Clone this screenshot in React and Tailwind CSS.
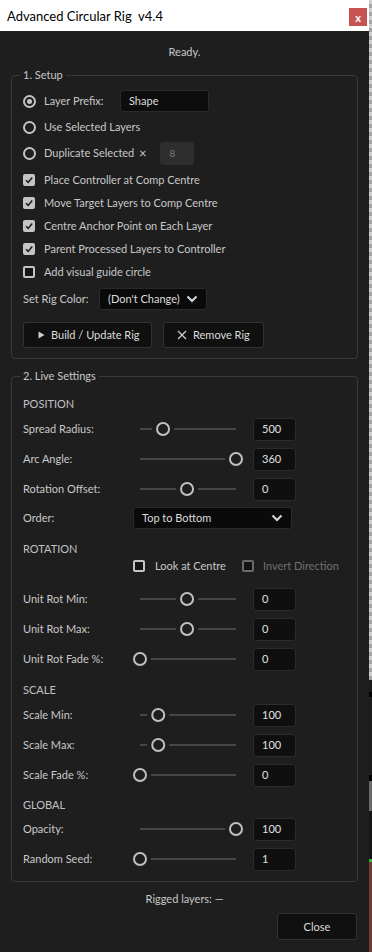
import React from 'react';

const txt = 'text-[#c8c8c8]';

const Radio = ({ on }) => (
  <span className="w-[13px] h-[13px] rounded-full border-2 border-[#c4c4c4] flex items-center justify-center shrink-0">
    {on && <span className="w-[5px] h-[5px] rounded-full bg-[#c4c4c4]" />}
  </span>
);

const Check = ({ on, dim }) =>
  on ? (
    <span className="w-[12px] h-[12px] rounded-[2px] bg-[#c4c4c4] flex items-center justify-center shrink-0">
      <svg width="10" height="10" viewBox="0 0 10 10">
        <path d="M2 5.2 L4.2 7.4 L8.2 2.6" fill="none" stroke="#1e1e1e" strokeWidth="1.6" />
      </svg>
    </span>
  ) : (
    <span
      className={`w-[12px] h-[12px] rounded-[2px] border-2 bg-[#141414] shrink-0 ${
        dim ? 'border-[#6a6a6a]' : 'border-[#c4c4c4]'
      }`}
    />
  );

const Chevron = () => (
  <svg width="12" height="8" viewBox="0 0 12 8" className="shrink-0">
    <path d="M1.5 1.5 L6 6 L10.5 1.5" fill="none" stroke="#d8d8d8" strokeWidth="2" />
  </svg>
);

const Slider = ({ t }) => {
  const cx = 7 + t * 96;
  return (
    <svg width="112" height="16" className="shrink-0">
      {cx - 11 > 7 && <line x1="7" y1="8" x2={cx - 11} y2="8" stroke="#555" strokeWidth="1.5" />}
      {cx + 11 < 103 && <line x1={cx + 11} y1="8" x2="103" y2="8" stroke="#555" strokeWidth="1.5" />}
      <circle cx={cx} cy="8" r="6" fill="#1e1e1e" stroke="#c0c0c0" strokeWidth="2" />
    </svg>
  );
};

const SliderRow = ({ label, t, value }) => (
  <div className="h-[30px] flex items-center">
    <span className={`w-[110px] ${txt}`}>{label}</span>
    <Slider t={t} />
    <div className="ml-[8px] w-[43px] h-[23px] rounded-[3px] bg-[#0f0f0f] border border-[#2c2c2c] flex items-center pl-[8px] text-[#e0e0e0]">
      {value}
    </div>
  </div>
);

const Heading = ({ children, className = '' }) => (
  <div className={`h-[16px] leading-[16px] text-[#c0c0c0] ${className}`}>{children}</div>
);

export default function App() {
  return (
    <div className="w-[372px] h-[952px] flex font-['Lato',sans-serif] text-[11px] leading-[16px] whitespace-nowrap">
      <div className="w-[369px] h-full flex flex-col bg-[#1e1e1e]">
        <div className="h-[31px] bg-white flex items-center pl-[7px] pr-[2px] shrink-0">
          <span className="text-[13px] text-black flex-1 whitespace-pre">Advanced Circular Rig  v4.4</span>
          <div className="w-[18px] h-[18px] bg-[#c75353] flex items-center justify-center text-white text-[11px] font-bold leading-none mt-[3px]">
            x
          </div>
        </div>

        <div className={`pt-[13px] h-[29px] text-center ${txt}`}>Ready.</div>

        <fieldset className="mt-[7px] mx-[11px] border border-[#3a3a3a] rounded-[4px] px-[8px] pb-[10px]">
          <legend className={`px-[3px] ${txt}`}>1. Setup</legend>
          <div className="px-[3px]">
            <div className="mt-[5px] h-[26px] flex items-center">
              <Radio on />
              <span className={`ml-[8px] w-[76px] ${txt}`}>Layer Prefix:</span>
              <div className="w-[89px] h-[22px] rounded-[3px] bg-[#0d0d0d] border border-[#2a2a2a] flex items-center pl-[8px] text-[#dcdcdc]">
                Shape
              </div>
            </div>
            <div className="h-[26px] flex items-center">
              <Radio />
              <span className={`ml-[8px] ${txt}`}>Use Selected Layers</span>
            </div>
            <div className="h-[26px] flex items-center">
              <Radio />
              <span className={`ml-[8px] w-[90px] ${txt}`}>Duplicate Selected</span>
              <span className={`ml-[5px] ${txt} text-[13px]`}>×</span>
              <div className="ml-[13px] w-[34px] h-[23px] rounded-[3px] bg-[#2e2e2e] flex items-center pl-[10px] text-[#7a7a7a] text-[10px]">
                8
              </div>
            </div>
            <div className="mt-[2px]">
              {[
                'Place Controller at Comp Centre',
                'Move Target Layers to Comp Centre',
                'Centre Anchor Point on Each Layer',
                'Parent Processed Layers to Controller',
              ].map((l) => (
                <div key={l} className="h-[23px] flex items-center">
                  <Check on />
                  <span className={`ml-[9px] ${txt}`}>{l}</span>
                </div>
              ))}
              <div className="h-[23px] flex items-center">
                <Check />
                <span className={`ml-[9px] ${txt}`}>Add visual guide circle</span>
              </div>
            </div>
            <div className="mt-[5px] h-[22px] flex items-center">
              <span className={`w-[76px] ${txt}`}>Set Rig Color:</span>
              <div className="w-[108px] h-[22px] rounded-[3px] bg-[#0a0a0a] border border-[#2a2a2a] flex items-center pl-[8px] pr-[8px] justify-between text-[#dcdcdc]">
                <span>(Don't Change)</span>
                <Chevron />
              </div>
            </div>
            <div className="mt-[12px] flex gap-[11px]">
              <button className="w-[129px] h-[26px] rounded-[3px] bg-[#101010] border border-[#333] flex items-center pl-[14px] gap-[6px] text-[#dcdcdc]">
                <svg width="7" height="8" viewBox="0 0 7 8">
                  <path d="M0.5 0.5 L6.5 4 L0.5 7.5 Z" fill="#d0d0d0" />
                </svg>
                Build / Update Rig
              </button>
              <button className="w-[101px] h-[26px] rounded-[3px] bg-[#101010] border border-[#333] flex items-center pl-[13px] gap-[6px] text-[#dcdcdc]">
                <svg width="10" height="10" viewBox="0 0 10 10">
                  <path d="M1 1 L9 9 M9 1 L1 9" stroke="#d0d0d0" strokeWidth="1.2" />
                </svg>
                Remove Rig
              </button>
            </div>
          </div>
        </fieldset>

        <fieldset className="mt-[9px] mx-[11px] border border-[#3a3a3a] rounded-[4px] px-[8px] pb-[7px]">
          <legend className={`px-[3px] ${txt}`}>2. Live Settings</legend>
          <div className="px-[3px]">
            <Heading className="mt-[12px]">POSITION</Heading>
            <div className="mt-[2px]">
              <SliderRow label="Spread Radius:" t={0.24} value="500" />
              <SliderRow label="Arc Angle:" t={1} value="360" />
              <SliderRow label="Rotation Offset:" t={0.49} value="0" />
            </div>
            <div className="h-[28px] flex items-center">
              <span className={`w-[110px] ${txt}`}>Order:</span>
              <div className="w-[159px] h-[22px] rounded-[3px] bg-[#0a0a0a] border border-[#2a2a2a] flex items-center justify-between pl-[8px] pr-[8px] text-[#dcdcdc]">
                <span>Top to Bottom</span>
                <Chevron />
              </div>
            </div>

            <Heading className="mt-[9px]">ROTATION</Heading>
            <div className="h-[18px] flex items-center pl-[110px]">
              <Check />
              <span className={`ml-[10px] w-[87px] ${txt}`}>Look at Centre</span>
              <Check dim />
              <span className="ml-[9px] text-[#6f6f6f]">Invert Direction</span>
            </div>
            <div className="mt-[9px]">
              <SliderRow label="Unit Rot Min:" t={0.49} value="0" />
              <SliderRow label="Unit Rot Max:" t={0.49} value="0" />
              <SliderRow label="Unit Rot Fade %:" t={0} value="0" />
            </div>

            <Heading className="mt-[8px]">SCALE</Heading>
            <div className="mt-[2px]">
              <SliderRow label="Scale Min:" t={0.19} value="100" />
              <SliderRow label="Scale Max:" t={0.19} value="100" />
              <SliderRow label="Scale Fade %:" t={0} value="0" />
            </div>

            <Heading className="mt-[7px]">GLOBAL</Heading>
            <div className="mt-[1px]">
              <SliderRow label="Opacity:" t={1} value="100" />
              <SliderRow label="Random Seed:" t={0} value="1" />
            </div>
          </div>
        </fieldset>

        <div className={`mt-[9px] h-[16px] text-center ${txt}`}>Rigged layers: —</div>
        <div className="mt-[6px] flex justify-end pr-[12px]">
          <button className="w-[80px] h-[27px] rounded-[3px] bg-[#101010] border border-[#333] text-[#dcdcdc]">
            Close
          </button>
        </div>
      </div>

      <div className="w-[3px] h-full flex flex-col">
        <div className="h-[680px] bg-[repeating-linear-gradient(180deg,#cfcfcf_0px,#cfcfcf_4px,#a3a3a3_4px,#a3a3a3_8px)]" />
        <div className="h-[12px] bg-[#1a1a1a]" />
        <div className="h-[5px] bg-[#000]" />
        <div className="h-[78px] bg-[#1c1c1c]" />
        <div className="h-[6px] bg-[#000]" />
        <div className="h-[30px] bg-[#6a6a6a]" />
        <div className="h-[48px] bg-[#161616]" />
        <div className="h-[3px] bg-[#2fb52f]" />
        <div className="flex-1 bg-[#6e3a3a]" />
      </div>
    </div>
  );
}
